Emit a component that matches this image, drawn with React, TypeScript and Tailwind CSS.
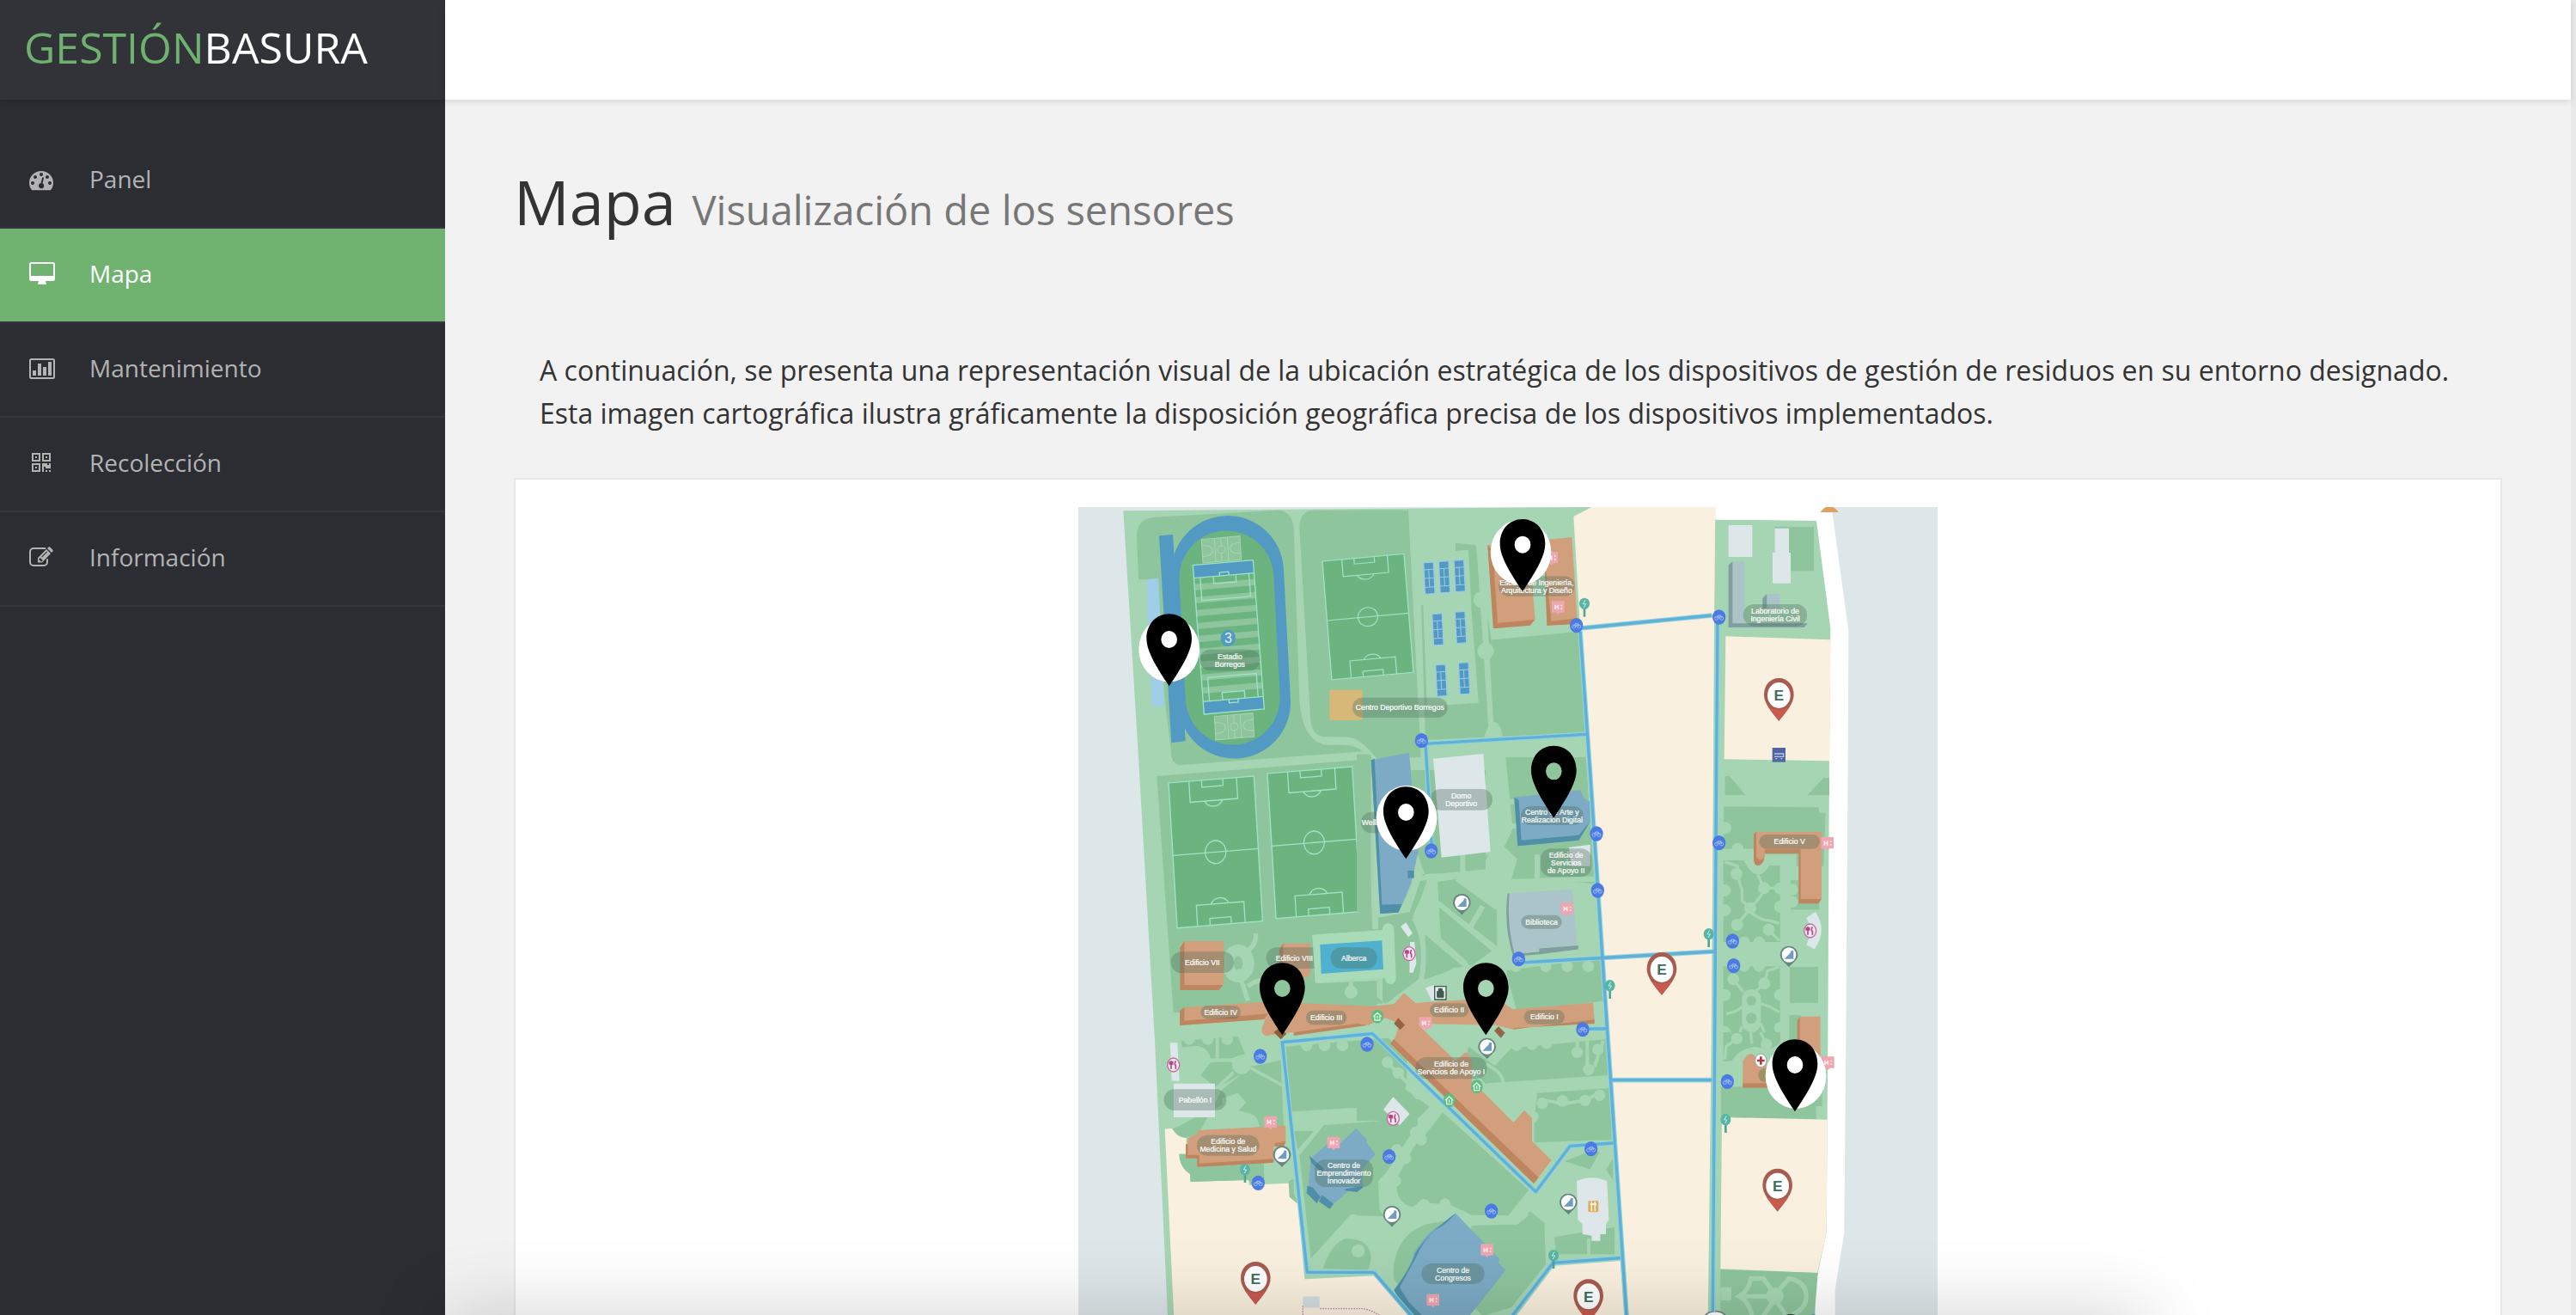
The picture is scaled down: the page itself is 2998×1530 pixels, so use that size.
import React from "react";

const LIGHT = "#a6d5b3";
const MID = "#8ec59d";
const PITCH = "#6bb37f";
const LINE = "#9fe3c6";
const WATER = "#5299c3";
const CREAM = "#faf0df";
const PALE = "#dde6e9";
const BRICK = "#d29f7c";
const BRICK_DARK = "#bd8560";
const STEEL = "#7dabc5";
const STEEL_DARK = "#4f90a8";

/* ---------- sidebar icons ---------- */

const DashboardIcon = () => (
  <svg viewBox="0 0 30 30" className="h-[30px] w-[30px]" fill="currentColor">
    <path
      fillRule="evenodd"
      d="M3 26C1 23.500 0 20.600 0 17.900A14 14 0 0 1 28 17.900C28 20.600 27 23.500 25 26Q24.600 26.300 24 26.300H4Q3.400 26.300 3 26ZM4 16a2 2 0 1 0 0 4a2 2 0 1 0 0-4ZM7 9a2 2 0 1 0 0 4a2 2 0 1 0 0-4ZM14 6a2 2 0 1 0 0 4a2 2 0 1 0 0-4ZM21 9a2 2 0 1 0 0 4a2 2 0 1 0 0-4ZM24 16a2 2 0 1 0 0 4a2 2 0 1 0 0-4ZM15.500 18.300L17 12.300Q16.900 11.300 16 11.300Q15.300 11.300 15.100 12L13.600 18A3.200 3.200 0 1 0 15.500 18.300Z"
    />
  </svg>
);

const DesktopIcon = () => (
  <svg viewBox="0 0 30 30" className="h-[30px] w-[30px]" fill="currentColor">
    <path
      fillRule="evenodd"
      d="M2.500 0H27.500A2.500 2.500 0 0 1 30 2.500V19.500A2.500 2.500 0 0 1 27.500 22H19Q19 23.500 20 24.800Q20 26 19 26H11Q10 26 10 24.800Q11 23.500 11 22H2.500A2.500 2.500 0 0 1 0 19.500V2.500A2.500 2.500 0 0 1 2.500 0ZM2.500 2Q2 2 2 2.500V16H28V2.500Q28 2 27.500 2Z"
    />
  </svg>
);

const ChartIcon = () => (
  <svg viewBox="0 0 30 30" className="h-[30px] w-[30px]" fill="currentColor">
    <path
      fillRule="evenodd"
      d="M2.500 2H27.500A2.500 2.500 0 0 1 30 4.500V23.500A2.500 2.500 0 0 1 27.500 26H2.500A2.500 2.500 0 0 1 0 23.500V4.500A2.500 2.500 0 0 1 2.500 2ZM2.500 4Q2 4 2 4.500V23.500Q2 24 2.500 24H27.500Q28 24 28 23.500V4.500Q28 4 27.500 4ZM4 16H8V22H4ZM10 8H14V22H10ZM16 12H20V22H16ZM22 6H26V22H22Z"
    />
  </svg>
);

const QrIcon = () => (
  <svg viewBox="0 0 30 30" className="h-[30px] w-[30px]" fill="currentColor">
    <path
      fillRule="evenodd"
      d="M3 2H13V12H3ZM5 4V10H11V4ZM7 6H9V8H7ZM15 2H25V12H15ZM17 4V10H23V4ZM19 6H21V8H19ZM3 14H13V24H3ZM5 16V22H11V16ZM7 18H9V20H7ZM15 14H21V16H23V14H25V20H19V18H17V24H15ZM19 22H21V24H19ZM23 22H25V24H23Z"
    />
  </svg>
);

const EditIcon = () => (
  <svg viewBox="0 0 30 30" className="h-[30px] w-[30px]" fill="currentColor">
    <path
      d="M18.500 3H5A4 4 0 0 0 1 7V19A4 4 0 0 0 5 23H17A4 4 0 0 0 21 19V16"
      fill="none"
      stroke="currentColor"
      strokeWidth="2"
      strokeLinecap="round"
    />
    <path
      fillRule="evenodd"
      d="M10 14L20 4L25 9L15 19.500H10ZM11.500 15.500V17H13V18.200H14.500L15.800 17L12.600 14ZM20.300 6.500L14.200 12.700L14.900 13.400L21 7.200Z"
    />
    <path d="M21 3L22.500 1.600Q23.300 1 24.200 1.600L27.400 4.800Q28 5.700 27.400 6.500L26 8Z" />
  </svg>
);

/* ---------- map symbols ---------- */

type At = { x: number; y: number };

const Pin = ({ x, y, halo }: At & { halo?: [number, number] }) => (
  <g transform={`translate(${x} ${y})`}>
    {halo && <ellipse cx={halo[0]} cy={halo[1]} rx="106" ry="114" fill="#fff" />}
    <path
      fillRule="evenodd"
      d="M0 0C46 0 79 36 79 86C79 130 45 185 0 252C-45 185 -79 130 -79 86C-79 36 -46 0 0 0ZM0 59A28 30 0 1 0 0 119A28 30 0 1 0 0 59Z"
    />
  </g>
);

const Parking = ({ x, y }: At) => (
  <g transform={`translate(${x} ${y})`}>
    <path d="M0 -60C30 -60 52 -36 52 -2C52 28 28 56 0 90C-28 56 -52 28 -52 -2C-52 -36 -30 -60 0 -60Z" fill="#a85c50" />
    <path d="M-38 40Q0 60 38 40L0 88Z" fill="#c95a4d" />
    <ellipse rx="40" ry="45" fill="#fff" />
    <text textAnchor="middle" y="19" fontSize="52" fontWeight="700" fill="#3c6e60">
      E
    </text>
  </g>
);

const Bike = ({ x, y }: At) => (
  <g transform={`translate(${x} ${y})`}>
    <ellipse rx="23" ry="26" fill="#4a7be2" />
    <g fill="none" stroke="#a9c4f5" strokeWidth="2.500">
      <circle cx="-9" cy="4" r="6" />
      <circle cx="9" cy="4" r="6" />
      <path d="M-9 4L-4 -6H6L9 4M-4 -6L1 4L6 -6" />
    </g>
  </g>
);

const Charger = ({ x, y }: At) => (
  <g transform={`translate(${x} ${y})`}>
    <path d="M0 15V46" stroke="#4fa695" strokeWidth="8" />
    <ellipse rx="18" ry="20" fill="#58b5a6" />
    <path d="M3 -13L-5 1H5L-2 13" fill="none" stroke="#cdeee6" strokeWidth="3" />
  </g>
);

const Sculpture = ({ x, y }: At) => (
  <g transform={`translate(${x} ${y})`}>
    <path d="M0 -31C18 -31 31 -18 31 0C31 18 14 26 0 43C-14 26 -31 18 -31 0C-31 -18 -18 -31 0 -31Z" fill="#66877f" />
    <ellipse rx="25" ry="26" fill="#fff" />
    <path d="M-16 14L6 -8L8 -16L16 -14V14Z" fill="#6f9cc0" />
  </g>
);

const Food = ({ x, y }: At) => (
  <g transform={`translate(${x} ${y})`}>
    <ellipse rx="21" ry="24" fill="#f6e6f0" stroke="#c06aa0" strokeWidth="4" />
    <path d="M-8 -14V14M-13 -12V-3H-3V-12M8 -14Q2 -2 8 2V14" fill="none" stroke="#b0478a" strokeWidth="5" />
  </g>
);

const Vending = ({ x, y }: At) => (
  <g transform={`translate(${x} ${y})`}>
    <path d="M-22 -21H22V19H6L0 27L-6 19H-22Z" fill="#eea6b1" />
    <path d="M-10 -8V8M0 -8V8M-10 0H0M12 -8V-3M12 3V8" stroke="#fde9ec" strokeWidth="5" />
  </g>
);

const Shelter = ({ x, y }: At) => (
  <g transform={`translate(${x} ${y})`}>
    <ellipse rx="21" ry="24" fill="#5dbd7e" />
    <path d="M-14 0L0 -13L14 0M-9 -3V13H9V-3M0 -3V8" fill="none" stroke="#e2f6e7" strokeWidth="4" />
  </g>
);

const Label = ({ x, y, w, h, lines }: At & { w: number; h: number; lines: string[] }) => (
  <g transform={`translate(${x} ${y})`}>
    <rect x={-w / 2} y={-h / 2} width={w} height={h} rx={Math.min(h / 2, 36)} fill="#4d6b5a" fillOpacity="0.340" />
    <text textAnchor="middle" fontSize="26" fill="#fff" stroke="#fff" strokeWidth="0.600">
      {lines.map((line, i) => (
        <tspan key={line} x="0" y={9 + (i - (lines.length - 1) / 2) * 27}>
          {line}
        </tspan>
      ))}
    </text>
  </g>
);

const Pitch = ({ matrix }: { matrix: string }) => (
  <g transform={`matrix(${matrix})`} fill="none" stroke={LINE} strokeWidth="4">
    <rect width="298" height="506" fill={PITCH} />
    <path d="M0 253H298M71 0V73H237V0M115 0V24H189V0M71 506V433H237V506M115 506V482H189V506M122 73A34 34 0 0 0 184 73M122 433A34 34 0 0 1 184 433" />
    <ellipse cx="149" cy="253" rx="36" ry="40" />
  </g>
);

const Court = ({ x, y }: At) => (
  <g transform={`matrix(1 -0.060 0.050 1 ${x} ${y})`}>
    <rect width="35" height="110" fill={WATER} stroke="#9ccbe4" strokeWidth="4" />
    <path d="M0 25H35M0 55H35M0 86H35M17 25V86" stroke="#9ccbe4" strokeWidth="3" />
  </g>
);

const MiniField = ({ x, y }: At) => (
  <g transform={`matrix(1 -0.090 0.060 1 ${x} ${y})`} fill="none" stroke={LIGHT} strokeWidth="3">
    <rect width="134" height="82" fill={MID} />
    <path d="M45 0V82M67 0V28M67 54V82M90 0V82M0 22Q36 22 36 41Q36 60 0 60M134 22Q98 22 98 41Q98 60 134 60" />
    <circle cx="67" cy="41" r="13" />
  </g>
);

/* ---------- campus map ---------- */

const Ground = () => (
  <g>
    <rect width="3000" height="2823" fill={PALE} />
    <path d="M2224 0H2630L2689 433L2687 873L2680 1863L2674 2533L2642 2733V2823H2200Z" fill="#fff" />
    <path d="M157 13L1792 0H2224V43L2577 48L2626 423L2622 873L2617 1863L2612 2533L2582 2673L2572 2733V2823H312L267 1863L210 873Z" fill={LIGHT} />
    <path d="M2224 0V44H2580L2574 0Z" fill="#fff" />
    <path d="M1792 0H2224L2220 413L2217 900L2210 1863L2200 2700L2198 2823H1914L1857 1998L1785 933L1752 423L1729 33Z" fill={CREAM} />
    <path d="M2590 18Q2622 -25 2655 18Z" fill="#dda163" />
  </g>
);

const NorthWest = () => (
  <g transform="translate(-18 -27)">
    <path d="M228 280L222 120Q226 70 280 62L720 38Q765 45 770 100L790 700Q800 850 890 858Q980 850 1010 880L370 928Q340 920 342 880L320 700L290 280Z" fill={MID} />
    <path d="M790 100Q790 40 840 38L1170 38L1214 900L1060 905Q1000 830 960 830L870 828Q830 820 828 760Z" fill={MID} />
    <path d="M255 280L298 276L318 722L275 724Z" fill="#a0cde8" />
    <path d="M300 127L348 123L392 843L343 850Z" fill={WATER} />
    <g transform="rotate(-3 548 481)">
      <rect x="355" y="57" width="392" height="848" rx="196" fill={WATER} />
      <rect x="381" y="109" width="330" height="748" rx="165" fill={PITCH} />
    </g>
    <MiniField x={448} y={140} />
    <MiniField x={493} y={758} />
    <g transform="matrix(1 -0.086 0.075 1 418 230)">
      <rect width="210" height="520" fill={PITCH} />
      {[66, 111, 156, 201, 246, 291, 336, 381, 426].map((y) => (
        <rect key={y} y={y} width="210" height="22" fill={MID} />
      ))}
      <rect width="210" height="45" fill={WATER} />
      <rect y="476" width="210" height="44" fill={WATER} />
      <path d="M0 0H210V520H0ZM0 45H210M0 476H210M22 45V125H192V45M68 45V70H146V45M90 45V33H122V45M22 476V394H192V476M68 476V450H146V476M90 476V488H122V476" fill="none" stroke={LINE} strokeWidth="4" />
    </g>
    <ellipse cx="541" cy="484" rx="26" ry="29" fill={WATER} />
    <text x="541" y="501" textAnchor="middle" fontSize="48" fill="#e4f0f7">
      3
    </text>
    <Label x={547} y={561} w={210} h={74} lines={["Estadio", "Borregos"]} />
    <Pitch matrix="0.956 -0.087 0.065 0.818 870 216" />
    <path d="M895 665H1010V771H895Z" fill="#d8b878" />
  </g>
);

const NorthCenter = () => (
  <g transform="translate(972 -27)">
    <path d="M345 152L415 160L470 490L780 460L800 820L510 835Q505 780 480 778Q460 778 445 830L240 840L225 370H400L390 176L345 180Z" fill={MID} />
    <path d="M225 185L385 180L425 710L245 722Z" fill={LIGHT} />
    <path d="M418 160L442 160L478 790L460 800Z" fill={LIGHT} />
    <circle cx="436" cy="350" r="29" fill={LIGHT} />
    <circle cx="450" cy="529" r="29" fill={LIGHT} />
    <path d="M470 475L770 447V462L470 490Z" fill={LIGHT} />
    <Court x={233} y={221} />
    <Court x={286} y={217} />
    <Court x={339} y={213} />
    <Court x={263} y={400} />
    <Court x={343} y={393} />
    <Court x={275} y={578} />
    <Court x={355} y={571} />
    <path d="M457 160L600 145L623 420L605 440L477 451Z" fill={BRICK} />
    <path d="M457 160L475 180L492 432L477 451Z" fill={BRICK_DARK} />
    <path d="M477 451L492 432L620 420L605 440Z" fill={BRICK_DARK} />
    <path d="M655 142L751 132L770 420L740 436L664 440Z" fill={BRICK} />
    <path d="M655 200L680 430L664 440ZM664 440L680 425L770 415L755 436Z" fill={BRICK_DARK} />
    <Vending x={680} y={204} />
    <Vending x={703} y={376} />
    <Label x={628} y={303} w={266} h={70} lines={["Escuela de Ingeniería,", "Arquitectura y Diseño"]} />
  </g>
);

const NorthEast = () => (
  <g transform="translate(1962 -27)">
    <path d="M470 95L606 97V250H500Z" fill={MID} />
    <path d="M308 90H391V201H308ZM470 101H519V186H525V293H462V186H470Z" fill={PALE} />
    <path d="M308 230L322 217H364V433H584L572 447H308Z" fill="#abc4c9" />
    <path d="M308 230L322 217V433H584L572 447H308Z" fill="#7f9fa0" />
    <path d="M427 345L442 330H487V380H427Z" fill="#abc4c9" />
    <path d="M427 345L442 330V380H427Z" fill="#7f9fa0" />
    <Label x={471} y={404} w={222} h={76} lines={["Laboratorio de", "Ingeniería Civil"]} />
    <path d="M298 478L664 490L661 913L293 907Z" fill={CREAM} />
    <path d="M461 867H507V917H461Z" fill="#4f66a3" />
    <path d="M468 888H500V898H468M472 905H478M490 905H496" stroke="#b9c6e6" strokeWidth="4" fill="none" />
  </g>
);

const West = () => (
  <g transform="translate(-18 873)">
    <path d="M292 66L1020 8L1045 605L835 620L850 790L1060 780V870L350 892Z" fill={MID} />
    <Pitch matrix="1 -0.080 0.060 1 333 90" />
    <Pitch matrix="0.993 -0.080 0.060 1 678 57" />
    <path d="M638 615Q640 660 600 680M575 740L610 850M610 800Q660 760 690 800" fill="none" stroke={LIGHT} strokeWidth="16" />
    <ellipse cx="576" cy="720" rx="36" ry="46" fill="none" stroke={LIGHT} strokeWidth="40" />
    <path d="M373 665L388 642H526V790L508 813H373Z" fill={BRICK} />
    <path d="M373 665L388 642V795H523L508 813H373Z" fill={BRICK_DARK} />
    <path d="M720 670L733 650H828V755L815 770H720Z" fill={BRICK} />
    <path d="M720 670L733 650V760L720 770Z" fill={BRICK_DARK} />
    <Label x={451} y={716} w={220} h={74} lines={["Edificio VII"]} />
    <Label x={772} y={701} w={196} h={74} lines={["Edificio VIII"]} />
    <path d="M372 885L388 873L690 853L1050 870L1020 935L720 965L690 970Q660 980 658 950L670 915L372 936Z" fill={BRICK} />
    <path d="M372 885L388 873V920L680 895L665 915L372 936ZM770 960L1030 925L1020 937L770 972Z" fill={BRICK_DARK} />
    <path d="M700 960L725 985L745 965L720 945Z" fill="#8d5e3e" />
    <Label x={515} y={890} w={140} h={46} lines={["Edificio IV"]} />
    <Label x={884} y={909} w={142} h={50} lines={["Edificio III"]} />
  </g>
);

const Center = () => (
  <g transform="translate(972 873)">
    <path d="M0 -10H50V540H0ZM190 45H450V400L230 408L185 540L75 560V600H0V690L90 700V860H0V780L100 860L215 795L235 680L195 555L225 490L245 430L210 330Z" fill={MID} />
    <path d="M520 0H800L830 440L540 425L560 355L515 312L545 250ZM520 745L860 700L870 850L560 890Z" fill={MID} />
    <path d="M280 435L350 425L490 530V660L285 500ZM285 510L480 670L400 730L290 640ZM240 620L370 730L225 780ZM365 350L460 340L430 400L370 400Z" fill={MID} />
    <g fill="none" stroke={LIGHT} strokeWidth="18">
      <path d="M370 340V405M195 425L450 400L500 440M272 420L285 640M350 425L490 525M285 510L490 680M440 520L395 595M200 560L380 720M505 300L510 680M490 -20L500 330M520 155H550M540 240H560M530 435L830 425M630 340V430M683 440V470" />
      <path d="M200 560Q250 640 225 780L130 850" />
    </g>
    <path d="M495 330L560 355L535 440L520 560L560 730H500L485 480Z" fill={LIGHT} />
    <path d="M215 800L340 735L520 730L540 850L260 850Z" fill={LIGHT} />
    <path d="M50 10L183 -15L215 330L190 440L145 542L82 546L78 500Z" fill={STEEL} />
    <path d="M50 10L62 5L88 515L160 512L195 435L145 542L82 546Z" fill={STEEL_DARK} />
    <path d="M178 396H200V422H178Z" fill={STEEL_DARK} />
    <path d="M267 5L442 -12L467 330L296 350Z" fill={PALE} />
    <Label x={365} y={148} w={218} h={74} lines={["Domo", "Deportivo"]} />
    <Label x={70} y={228} w={110} h={74} lines={["Wellness"]} />
    <path d="M550 140L780 115L795 145L815 155V225L775 290L562 310Z" fill={STEEL} />
    <path d="M550 140L566 150L575 290L775 272L815 225L775 290L562 310Z" fill={STEEL_DARK} />
    <Label x={682} y={204} w={218} h={66} lines={["Centro de Arte y", "Realización Digital"]} />
    <path d="M740 315L815 305V380H750Z" fill={PALE} />
    <Label x={731} y={368} w={178} h={98} lines={["Edificio de", "Servicios", "de Apoyo II"]} />
    <path d="M530 475L752 461L770 655L640 665V673L548 690Q520 580 530 475Z" fill="#abc4c9" />
    <path d="M530 475Q520 580 548 690L640 682V670L770 660V668L640 685L548 692Q515 580 530 475Z" fill="#7f9fa0" stroke="#7f9fa0" strokeWidth="6" />
    <Label x={645} y={575} w={142} h={48} lines={["Biblioteca"]} />
    <Vending x={734} y={529} />
    <path d="M770 500L835 470L848 660L775 650Z" fill={LIGHT} />
    {[555, 660, 735, 808].map((x) => (
      <circle key={x} cx={x} cy="730" r="20" fill={LIGHT} />
    ))}
    <path d="M-155 620L90 603Q90 580 110 580Q130 582 130 604L137 770Q136 792 118 792Q100 790 98 770L-145 788Z" fill="#a9dbb9" />
    <path d="M-20 780V815" stroke={LIGHT} strokeWidth="14" />
    <circle cx="-20" cy="820" r="23" fill={LIGHT} />
    <path d="M-128 654L88 640L93 740L-124 756Z" fill="#4fb0cf" />
    <Label x={-10} y={701} w={162} h={74} lines={["Alberca"]} />
    <path d="M153 590L172 577L195 615L180 628ZM186 645H202L208 720L197 752H184ZM240 805L270 795L275 850H262Z" fill={PALE} />
    <Food x={183} y={686} />
    <path d="M0 875L130 862L165 823L205 858L400 845L500 850L545 880L825 857L830 915L545 950L485 935L215 930L250 990H130L150 930L100 910L40 935L0 930Z" fill={BRICK} />
    <path d="M130 930L145 910L168 935L152 952ZM480 955L495 940L518 962L503 980Z" fill="#946443" />
    <path d="M545 950L830 915V930L550 945Z" fill={BRICK_DARK} />
    <Label x={323} y={883} w={136} h={48} lines={["Edificio II"]} />
    <Label x={655} y={907} w={142} h={50} lines={["Edificio I"]} />
    <Vending x={240} y={928} />
    <path d="M272 800H312V846H272Z" fill="#e8efe9" stroke="#3f5a52" strokeWidth="4" />
    <path d="M281 817H303V838H281ZM286 817V808H298V817" fill="#3f5a52" stroke="#3f5a52" strokeWidth="3" />
    <Shelter x={72} y={905} />
    <Sculpture x={367} y={508} />
  </g>
);

const East = () => (
  <g transform="translate(1962 873)">
    <path d="M296 66H312L367 132H296ZM640 72H660V132H584ZM292 172L624 175V194H647L640 380H545V340H400V320H290ZM290 360H360Q410 450 450 378H488V645H290ZM290 730H488V990H290ZM525 430H560V510H625V532H525ZM522 732H621V857H522ZM520 900H560V990H520Z" fill={MID} />
    <g fill={LIGHT}>
      {[
        [297, 247], [340, 320], [336, 407], [432, 457], [384, 527], [338, 585], [448, 602], [295, 465], [295, 535], [488, 458],
        [488, 522], [325, 775], [433, 790], [295, 830], [488, 830], [488, 945], [295, 960], [415, 647], [362, 647], [415, 728], [362, 728],
        [410, 372], [530, 462], [530, 505],
      ].map(([x, y]) => (
        <circle key={`${x}-${y}`} cx={x} cy={y} r="21" />
      ))}
      <rect x="355" y="810" width="66" height="150" rx="33" />
    </g>
    <g fill="none" stroke={LIGHT} strokeWidth="10">
      <path d="M295 365L340 380Q340 430 355 460V500L384 527Q430 480 432 457H490M410 410L432 457M384 527L338 585M384 540Q420 570 448 570L485 580M448 602L485 640M325 775L360 820M433 790L445 745L485 732M433 790L400 820M300 895Q340 890 355 870M421 860L450 870L485 890M421 930L445 990M355 940L340 980M388 960V990" />
    </g>
    <circle cx="388" cy="850" r="17" fill={MID} />
    <circle cx="388" cy="911" r="19" fill={MID} />
    <path d="M396 270L405 260H633V495L622 511H553V336H435Q430 378 410 378Q396 376 396 355Z" fill={BRICK} />
    <path d="M396 270L405 260V345Q418 372 434 345Q430 378 410 378Q396 376 396 355ZM435 322H560V495H632L622 511H553V336H435Z" fill={BRICK_DARK} />
    <Vending x={653} y={300} />
    <Label x={521} y={295} w={212} h={50} lines={["Edificio V"]} />
    <path d="M580 560L612 540Q655 605 608 670L580 655L600 605Z" fill={PALE} />
    <Food x={593} y={606} />
    <Sculpture x={519} y={690} />
    <path d="M548 920L560 905H629V1110H548Z" fill={BRICK} />
    <path d="M548 920L557 905V1100H548Z" fill={BRICK_DARK} />
  </g>
);

const SouthWest = () => (
  <g transform="translate(-18 1833)">
    <path d="M378 30L575 15L600 75L550 92H480Q470 50 430 48L380 52ZM480 105L550 103L590 145L500 195L445 150ZM620 120L725 98L735 330L640 340Q640 280 580 275L530 250L420 300Q350 340 345 335Q350 370 380 370L435 360L520 200ZM370 425L440 440V470L665 455L665 520H410V495Q370 470 370 425ZM612 495H667V533H620ZM752 520L770 512V560L785 600L755 575Z" fill={MID} />
    <path d="M742 50L1100 20L1165 80Q1170 200 1145 240Q1090 265 1020 262L762 277ZM770 345H840L785 410ZM790 430L875 325L1200 300L1240 500L1200 600Q1120 660 970 635L830 790Z" fill={MID} />
    <path d="M872 825Q900 740 950 720Q1040 720 1040 790L1030 830Z" fill={MID} />
    <circle cx="995" cy="763" r="23" fill={LIGHT} />
    {[815, 878, 940, 405, 470, 538].map((x) => (
      <circle key={x} cx={x} cy={x > 600 ? 46 : 24} r="20" fill={LIGHT} />
    ))}
    <g fill="none" stroke={LIGHT} strokeWidth="11">
      <path d="M503 20V95M470 97H560M560 140L495 200M620 125L730 185M575 285Q640 280 645 330" />
      <circle cx="588" cy="113" r="23" strokeWidth="20" />
    </g>
    <path d="M520 230L575 212L603 245L555 300L522 280Z" fill={LIGHT} />
    <path d="M338 37H364L371 170H344ZM351 179H495V297H351Z" fill={PALE} />
    <Food x={350} y={114} />
    <Label x={426} y={236} w={218} h={74} lines={["Pabellón I"]} />
    <path d="M320 338L345 335Q360 365 395 370V425H370Q380 475 408 495L410 522L612 516L615 533L752 527L755 575L785 600L808 862L1050 850H1062L1180 1000H352Z" fill={CREAM} />
    <path d="M370 425H395L440 440V470L665 455V514L410 522L408 495Q370 470 370 425Z" fill={MID} />
    <path d="M393 390H400V370L435 355V342L742 326V385L735 400H700V455L433 470V440H393Z" fill={BRICK} />
    <path d="M393 390H400V428H440V458L700 442V455L433 470V440H393ZM704 388L742 380L735 398H704Z" fill={BRICK_DARK} />
    <Vending x={689} y={314} />
    <Label x={541} y={395} w={218} h={72} lines={["Edificio de", "Medicina y Salud"]} />
    <path d="M802 922H860V962H802Z" fill="#d3dde0" />
    <path d="M802 955V990M862 965H1010Q1050 970 1085 1000" fill="none" stroke="#c48aa4" strokeWidth="4" strokeDasharray="5 4" />
  </g>
);

const Innovation = () => (
  <g transform="translate(-18 1833)">
    <path d="M830 440L910 370L930 390L988 335L1025 375V385L1055 425L1010 480V540L960 555L895 613L820 555Z" fill={STEEL} />
    <path d="M830 440L870 475V488L835 455ZM820 540L835 545L860 575L850 592L818 560ZM870 572L905 600L895 613L862 590ZM950 550L1010 540L990 555Z" fill={STEEL_DARK} stroke={STEEL_DARK} strokeWidth="6" />
    <Vending x={909} y={386} />
    <Label x={945} y={492} w={204} h={96} lines={["Centro de", "Emprendimiento", "Innovador"]} />
  </g>
);

const South = () => (
  <g transform="translate(972 1833)">
    <path d="M300 280L600 550L530 640L400 638Q330 600 310 600L150 590Q120 540 155 500L190 430L215 390ZM80 110L170 200L255 260L165 350Q140 300 0 310V130ZM390 50L500 130V170L450 180L380 100ZM540 55L870 25L880 150L455 178L480 120ZM630 212L885 195L890 375L620 385V300ZM725 450L830 410L850 420L820 480ZM870 480L895 440V515ZM400 675L560 670L605 625L655 665L660 810L540 960L440 990L400 950ZM130 860Q120 750 200 690L300 645L340 700L150 890ZM690 715L900 680V775H695ZM0 500L60 520Q90 560 70 600L30 640H0Z" fill={MID} />
    <g fill={LIGHT}>
      {[
        [107, 105], [145, 142], [217, 215], [205, 350], [170, 440], [135, 520], [235, 602], [308, 600], [558, 45], [612, 42], [663, 38],
        [770, 70], [842, 60], [810, 130], [648, 248], [718, 240], [797, 238], [848, 220], [615, 295], [100, 560], [225, 375], [140, 410],
      ].map(([x, y]) => (
        <circle key={`${x}-${y}`} cx={x} cy={y} r="20" />
      ))}
      <path d="M75 520L110 480L160 400L260 250L300 275L200 400L140 510Q130 600 200 610L310 600L400 640L530 642L575 600L600 640L560 672L300 660L130 690L80 620Z" />
    </g>
    <path d="M107 105L150 150L230 230M648 235L720 250L797 238L848 210M770 20V70M805 20V150M860 30L830 120M450 110Q510 140 510 175M855 420L820 480M810 720V780" fill="none" stroke={LIGHT} strokeWidth="12" />
    <path d="M117 40L150 0L195 -45L345 100L380 70Q400 80 402 110V170L548 315L585 272L612 300V380L680 447L618 528Z" fill={BRICK} />
    <path d="M117 40L130 25L635 507L618 528Z" fill={BRICK_DARK} />
    <Label x={330} y={125} w={250} h={76} lines={["Edificio de", "Servicios de Apoyo I"]} />
    <path d="M93 270L127 226L185 285L150 325Z" fill={PALE} />
    <Food x={127} y={301} />
    <path d="M768 520Q820 495 874 520L880 655L870 670V705H850V728H820V710L788 705V670L772 655Z" fill={PALE} />
    <rect x="808" y="588" width="36" height="40" rx="5" fill="#dfae5e" />
    <path d="M815 600H837M820 590V625M832 590V625" stroke="#fff" strokeWidth="4" />
    <path d="M130 900Q190 820 200 770Q250 690 300 670Q330 640 345 632L498 790L495 805L520 830L430 945L385 1000H185Z" fill={STEEL} />
    <path d="M130 900Q190 820 205 770Q250 700 345 632Q320 665 275 690Q230 730 205 790L150 890L180 940L240 1000H190Z" fill={STEEL_DARK} />
    <Vending x={455} y={760} />
    <Vending x={266} y={935} />
    <Label x={336} y={843} w={220} h={72} lines={["Centro de", "Congresos"]} />
    <path d="M690 815L920 798L936 1000H550Z" fill={CREAM} />
  </g>
);

const SouthEast = () => (
  <g transform="translate(1962 1833)">
    <path d="M290 0H488V40L450 60L400 50Q340 60 320 100L290 102ZM282 190H635V258H614V303L282 298Z" fill={MID} />
    <circle cx="337" cy="22" r="20" fill={LIGHT} />
    <circle cx="440" cy="42" r="20" fill={LIGHT} />
    <path d="M337 22L300 50L295 95M385 0L390 40M420 0L440 42" fill="none" stroke={LIGHT} strokeWidth="10" />
    <path d="M358 100Q385 55 405 92L440 95V192H358Z" fill={BRICK} />
    <path d="M358 178H445V194H358Z" fill={BRICK_DARK} />
    <circle cx="436" cy="150" r="24" fill="#9d9168" />
    <ellipse cx="421" cy="99" rx="20" ry="23" fill="#fff" stroke="#9aa39c" strokeWidth="3" />
    <path d="M421 85V113M408 99H434" stroke="#b03a3f" strokeWidth="8" />
    <Vending x={655} y={106} />
    <path d="M285 297L653 305L650 700L618 840L280 826Z" fill={CREAM} />
    <path d="M280 828L620 840L608 990H280Z" fill={MID} />
    <g fill="none" stroke={LIGHT} strokeWidth="16">
      <path d="M345 922H470M380 860H430L470 915L520 860Q580 870 580 925Q575 970 530 985M385 860Q380 900 345 922Q380 940 390 990M430 990L470 930L510 990" />
    </g>
    <circle cx="470" cy="920" r="30" fill={LIGHT} />
    <path d="M280 890H318V936H280Z" fill={LIGHT} />
    <Parking x={479} y={536} />
    <ellipse cx="262" cy="1010" rx="44" ry="36" fill="#fff" stroke="#66877f" strokeWidth="5" />
    <circle cx="605" cy="1005" r="20" fill="#4a7be2" />
  </g>
);

const BIKE_ROUTES =
  "M2232 393L2228 873L2222 1863L2215 2808M1752 433L1787 933L1849 1863L1914 2823M1752 423L2212 378M1772 793L1212 826L1234 1183M1542 1590L2222 1551M1772 1821H1845M1857 2000H2212M1032 2671H799L712 1868L1027 1838L1597 2390L1717 2230L1867 2220M1032 2671L1172 2833M1507 2833L1657 2638L1892 2621";

const BIKES: [number, number][] = [
  [1739, 413], [1198, 815], [2237, 384], [1232, 1200], [1809, 1140], [1813, 1338], [1537, 1577], [1761, 1823], [1008, 1875],
  [635, 1917], [2237, 1172], [2284, 1515], [2288, 1601], [628, 2359], [1085, 2267], [1442, 2457], [1790, 2240], [2266, 2005],
];

const CHARGERS: [number, number][] = [
  [1767, 337], [1856, 1670], [2201, 1490], [582, 2312], [1659, 2612], [2260, 2138],
];

const PINS: { x: number; y: number; halo?: [number, number] }[] = [
  { x: 317, y: 373, halo: [0, 123] },
  { x: 1551, y: 42, halo: [-6, 116] },
  { x: 1660, y: 833 },
  { x: 1144, y: 976, halo: [2, 110] },
  { x: 712, y: 1591 },
  { x: 1423, y: 1591 },
  { x: 2502, y: 1858, halo: [3, 128] },
  { x: 2487, y: 2818 },
];

const CampusMap = () => (
  <svg
    viewBox="0 0 3000 2823"
    className="mx-auto w-[1000px] max-w-full"
    role="img"
    aria-label="Mapa de los sensores"
    fontFamily='"Liberation Sans", Arial, sans-serif'
  >
    <Ground />
    <NorthWest />
    <NorthCenter />
    <NorthEast />
    <West />
    <Center />
    <East />
    <SouthWest />
    <South />
    <SouthEast />
    <Innovation />
    <Label x={1123} y={700} w={332} h={70} lines={["Centro Deportivo Borregos"]} />
    <path d={BIKE_ROUTES} fill="none" stroke="#8fd3dd" strokeWidth="17" strokeLinejoin="round" />
    <path d={BIKE_ROUTES} fill="none" stroke="#60b0d8" strokeWidth="10" strokeLinejoin="round" />
    <Shelter x={1391} y={2023} />
    <Shelter x={1295} y={2071} />
    <Sculpture x={1427} y={1884} />
    <Sculpture x={1095} y={2470} />
    <Sculpture x={1711} y={2427} />
    <Sculpture x={711} y={2261} />
    <Parking x={2446} y={657} />
    <Parking x={2037} y={1614} />
    <Parking x={619} y={2694} />
    <Parking x={1781} y={2755} />
    {BIKES.map(([x, y]) => (
      <Bike key={`${x}-${y}`} x={x} y={y} />
    ))}
    {CHARGERS.map(([x, y]) => (
      <Charger key={`${x}-${y}`} x={x} y={y} />
    ))}
    {PINS.map((pin) => (
      <Pin key={`${pin.x}-${pin.y}`} {...pin} />
    ))}
  </svg>
);

/* ---------- page ---------- */

const NAV = [
  { label: "Panel", Icon: DashboardIcon },
  { label: "Mapa", Icon: DesktopIcon, active: true },
  { label: "Mantenimiento", Icon: ChartIcon },
  { label: "Recolección", Icon: QrIcon },
  { label: "Información", Icon: EditIcon },
];

export default function App() {
  return (
    <div className="flex h-screen overflow-hidden bg-[#f2f2f2] font-['Open_Sans',sans-serif] text-[#333]">
      <aside className="flex w-[518px] shrink-0 flex-col bg-[#2c2d32]">
        <a
          href="#inicio"
          className="flex h-[116px] items-center bg-[#323338] px-7 pb-1.5 text-[50px] leading-none text-white shadow-[0_2px_6px_rgba(0,0,0,0.12)]"
        >
          <span className="text-[#6fb26f]">GESTIÓN</span>BASURA
        </a>
        <nav className="mt-10">
          <ul>
            {NAV.map(({ label, Icon, active }) => (
              <li key={label} className="border-b-2 border-[#36373c]">
                <a
                  href={`#${label.toLowerCase()}`}
                  aria-current={active ? "page" : undefined}
                  className={
                    active
                      ? "flex h-[108px] items-center gap-10 bg-[#70b270] pl-[34px] text-[28px] text-white"
                      : "flex h-[108px] items-center gap-10 pl-[34px] text-[28px] text-[#b3b3b3]"
                  }
                >
                  <Icon />
                  <span className="pb-1">{label}</span>
                </a>
              </li>
            ))}
          </ul>
        </nav>
      </aside>

      <div className="flex min-w-0 grow flex-col border-r-[6px] border-[#e9e9e9]">
        <header className="h-[116px] shrink-0 bg-white shadow-[0_2px_8px_rgba(0,0,0,0.12)]" />
        <main className="grow px-20 pt-[68px]">
          <h1 className="text-[72px] leading-[100px]">
            Mapa <small className="text-[47px] leading-none text-[#777]">Visualización de los sensores</small>
          </h1>
          <p className="mt-[122px] px-[30px] text-[32px] leading-[50px]">
            A continuación, se presenta una representación visual de la ubicación estratégica de los dispositivos de
            gestión de residuos en su entorno designado. Esta imagen cartográfica ilustra gráficamente la disposición
            geográfica precisa de los dispositivos implementados.
          </p>
          <section className="mt-[50px] border-2 border-[#e7e7e7] bg-white py-8">
            <CampusMap />
          </section>
        </main>
      </div>

      <div className="pointer-events-none fixed top-full right-[500px] left-[518px] h-40 shadow-[0_0_90px_rgba(0,0,0,0.18)]" />
    </div>
  );
}
